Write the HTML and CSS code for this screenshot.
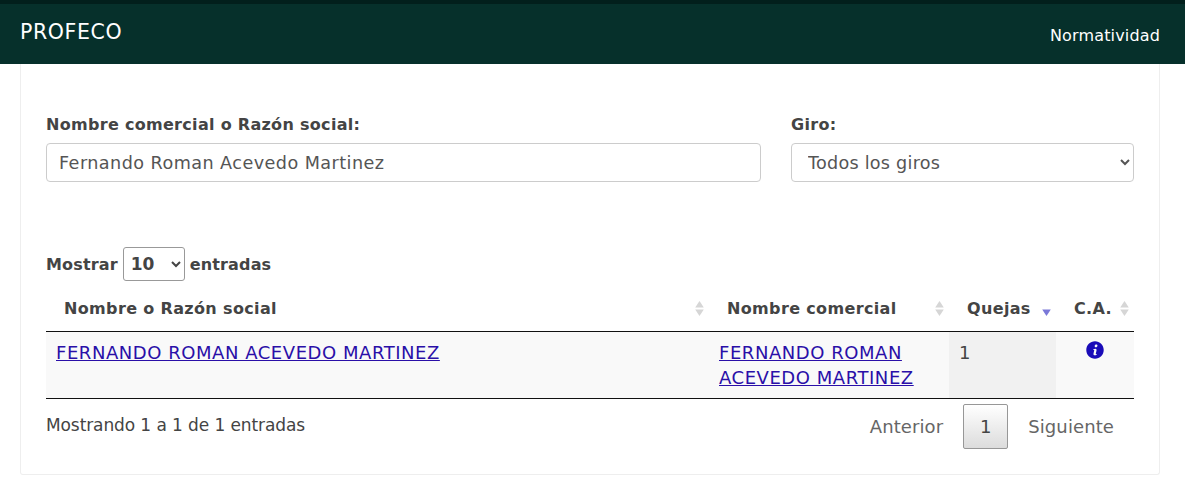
FILE: index.html
```html
<!DOCTYPE html>
<html lang="es">
<head>
    <meta charset="UTF-8">
    <meta name="viewport" content="width=device-width, initial-scale=1.0">
    <title>PROFECO</title>
    <link rel="stylesheet" href="styles.css">
</head>
<body>
    <nav class="navbar">
        <a href="#" class="brand">PROFECO</a>
        <a href="#" class="nav-link">Normatividad</a>
    </nav>
    <div class="card">
        <form class="filters">
            <div class="field">
                <label for="nombre">Nombre comercial o Razón social:</label>
                <input id="nombre" class="control" type="text" value="Fernando Roman Acevedo Martinez">
            </div>
            <div class="field">
                <label for="giro">Giro:</label>
                <select id="giro" class="control control-select">
                    <option>Todos los giros</option>
                </select>
            </div>
        </form>
        <div class="length">
            <span>Mostrar</span>
            <select class="length-select">
                <option>10</option>
            </select>
            <span>entradas</span>
        </div>
        <table class="results">
            <thead>
                <tr>
                    <th class="col-name">
                        <div class="th-inner">Nombre o Razón social
                            <svg class="sort" viewBox="0 0 8 14"><path class="sort-idle" d="M4 0 8 6H0z"/><path class="sort-idle" d="M0 8h8l-4 6z"/></svg>
                        </div>
                    </th>
                    <th class="col-trade">
                        <div class="th-inner">Nombre comercial
                            <svg class="sort" viewBox="0 0 8 14"><path class="sort-idle" d="M4 0 8 6H0z"/><path class="sort-idle" d="M0 8h8l-4 6z"/></svg>
                        </div>
                    </th>
                    <th class="col-count">
                        <div class="th-inner">Quejas
                            <svg class="sort" viewBox="0 0 8 14"><path class="sort-active" d="M0 8h8l-4 6z"/></svg>
                        </div>
                    </th>
                    <th class="col-ca">
                        <div class="th-inner">C.A.
                            <svg class="sort" viewBox="0 0 8 14"><path class="sort-idle" d="M4 0 8 6H0z"/><path class="sort-idle" d="M0 8h8l-4 6z"/></svg>
                        </div>
                    </th>
                </tr>
            </thead>
            <tbody>
                <tr>
                    <td><a href="#">FERNANDO ROMAN ACEVEDO MARTINEZ</a></td>
                    <td><a href="#">FERNANDO ROMAN ACEVEDO MARTINEZ</a></td>
                    <td class="sorted">1</td>
                    <td class="cell-info">
                        <svg class="info" viewBox="0 0 512 512"><path d="M256 8C119 8 8 119 8 256s111 248 248 248 248-111 248-248S393 8 256 8zm34 90c22 0 36 15 36 35 0 24-20 43-44 43-21 0-36-14-36-35 0-24 20-43 44-43zm-44 310c-28 0-38-20-32-50l20-92c3-13 1-18-9-18-7 0-17 3-25 7l5-22c20-9 44-16 62-16 28 0 38 21 32 50l-20 92c-3 13-1 18 9 18 7 0 17-3 25-7l-5 22c-20 9-44 16-62 16z"/></svg>
                    </td>
                </tr>
            </tbody>
        </table>
        <div class="table-footer">
            <div class="info-text">Mostrando 1 a 1 de 1 entradas</div>
            <div class="pager">
                <a href="#" class="page-btn">Anterior</a>
                <a href="#" class="page-btn current">1</a>
                <a href="#" class="page-btn">Siguiente</a>
            </div>
        </div>
    </div>
</body>
</html>
```

FILE: styles.css
```css
* {
    box-sizing: border-box;
}
body {
    font-family: 'DejaVu Sans', 'Noto Sans', sans-serif;
    margin: 0;
    background-color: #fff;
    color: #444;
    font-size: 17px;
}
.navbar {
    display: flex;
    justify-content: space-between;
    height: 64px;
    padding: 0 25px 0 20px;
    background-color: #06302b;
    border-top: 4px solid #021f1c;
    color: #fff;
}
.brand {
    font-size: 20.5px;
    letter-spacing: 0.6px;
    line-height: 56px;
    color: #fff;
    text-decoration: none;
}
.nav-link {
    font-size: 16px;
    letter-spacing: 0.15px;
    line-height: 64px;
    color: #fff;
    text-decoration: none;
}
.card {
    margin: 0 25px 0 20px;
    height: 411px;
    padding: 48px 25px 0 25px;
    border: 1px solid #eee;
    border-top: none;
    border-radius: 0 0 3px 3px;
}
.filters {
    display: grid;
    grid-template-columns: 715px 343px;
    gap: 30px;
}
label {
    display: block;
    margin-bottom: 5px;
    font-size: 16px;
    font-weight: 700;
    letter-spacing: 0.3px;
    line-height: 26px;
}
.control {
    display: block;
    width: 100%;
    height: 39px;
    padding: 0 12px;
    font-family: inherit;
    font-size: 17.6px;
    letter-spacing: 0.45px;
    color: #555;
    background-color: #fff;
    border: 1px solid #ccc;
    border-radius: 4px;
}
.control-select {
    letter-spacing: 0.25px;
}
.length {
    display: flex;
    align-items: center;
    gap: 5px;
    margin-top: 65px;
    font-size: 16px;
    font-weight: 700;
    letter-spacing: 0.15px;
}
.length-select {
    width: 62px;
    height: 34px;
    padding-left: 3px;
    font-family: inherit;
    font-size: 17px;
    font-weight: 700;
    color: #444;
    background-color: #fff;
    border: 1px solid #999;
    border-radius: 3px;
}
.results {
    width: 1088px;
    margin-top: 9px;
    border-collapse: collapse;
    table-layout: fixed;
}
.results th {
    height: 41px;
    padding: 0 5px 4px 18px;
    text-align: left;
    font-size: 16px;
    font-weight: 700;
    letter-spacing: 0.35px;
    border-bottom: 1px solid #111;
}
.th-inner {
    display: flex;
    justify-content: space-between;
    align-items: center;
}
.col-name {
    width: 663px;
}
.col-trade {
    width: 240px;
}
.col-count {
    width: 107px;
}
.col-ca {
    width: 78px;
}
.sort {
    width: 9px;
    height: 15px;
    flex: none;
}
.sort-idle {
    fill: #d6d6d6;
}
.sort-active {
    fill: #7a78d8;
}
.results td {
    height: 67px;
    padding: 8px 10px;
    vertical-align: top;
    font-size: 18px;
    letter-spacing: 0.55px;
    line-height: 25px;
    background-color: #f9f9f9;
    border-bottom: 1px solid #111;
}
.results a {
    color: #2a0fa8;
}
.results td.sorted {
    background-color: #f1f1f1;
}
.results td.cell-info {
    padding-top: 9px;
    text-align: center;
}
.info {
    width: 18px;
    height: 18px;
    fill: #1a0bb8;
    display: block;
    margin: 0 auto;
}
.table-footer {
    display: flex;
    justify-content: space-between;
    align-items: flex-start;
    padding-top: 5px;
}
.info-text {
    padding-top: 9px;
    letter-spacing: -0.1px;
    line-height: 25px;
}
.pager {
    display: flex;
    align-items: center;
    font-size: 18px;
    letter-spacing: 0.1px;
}
.page-btn {
    padding: 9px 20px;
    line-height: 25px;
    color: #666;
    text-decoration: none;
}
.current {
    width: 45px;
    padding: 9px 0;
    text-align: center;
    color: #444;
    border: 1px solid #979797;
    border-radius: 2px;
    background: linear-gradient(to bottom, #fff 0%, #dcdcdc 100%);
}
```
